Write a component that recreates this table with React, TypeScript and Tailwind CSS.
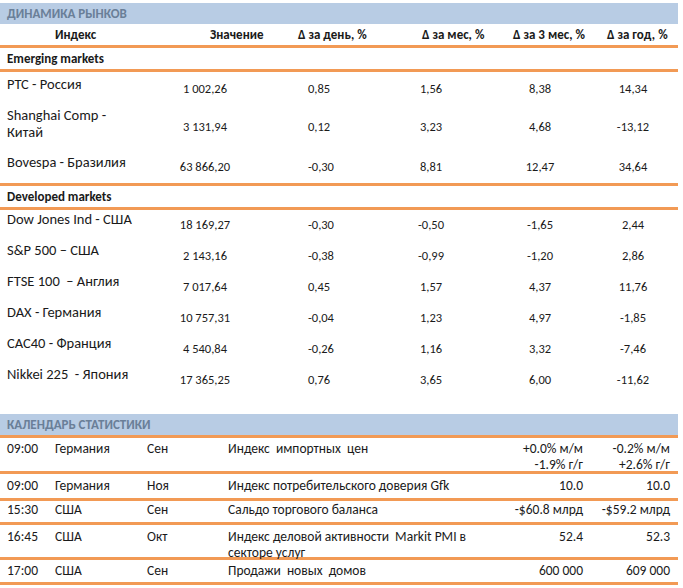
import React from "react"

const font = { fontFamily: "Carlito, Lato, 'Noto Sans', sans-serif" }

type Market = {
  name: string[]
  h: string
  np: string
  vp: string
  values: string[]
}

const emerging: Market[] = [
  { name: ["РТС - Россия"], h: "h-[35px]", np: "pt-[4px]", vp: "pt-[9px]", values: ["1 002,26", "0,85", "1,56", "8,38", "14,34"] },
  { name: ["Shanghai Comp -", "Китай"], h: "h-[47px]", np: "pt-0", vp: "pt-[12px]", values: ["3 131,94", "0,12", "3,23", "4,68", "-13,12"] },
  { name: ["Bovespa - Бразилия"], h: "h-[29px]", np: "pt-0", vp: "pt-[5px]", values: ["63 866,20", "-0,30", "8,81", "12,47", "34,64"] },
]

const developed: Market[] = [
  ["Dow Jones Ind - США", "18 169,27", "-0,30", "-0,50", "-1,65", "2,44"],
  ["S&P 500 – США", "2 143,16", "-0,38", "-0,99", "-1,20", "2,86"],
  ["FTSE 100  – Англия", "7 017,64", "0,45", "1,57", "4,37", "11,76"],
  ["DAX - Германия", "10 757,31", "-0,04", "1,23", "4,97", "-1,85"],
  ["CAC40 - Франция", "4 540,84", "-0,26", "1,16", "3,32", "-7,46"],
  ["Nikkei 225  - Япония", "17 365,25", "0,76", "3,65", "6,00", "-11,62"],
].map(([name, ...values]) => ({
  name: [name],
  h: "h-[31px]",
  np: "pt-[1px]",
  vp: "pt-[7px]",
  values,
}))

const calendar = [
  { time: "09:00", country: "Германия", period: "Сен", event: ["Индекс  импортных  цен"], prev: ["+0.0% м/м", "-1.9% г/г"], fc: ["-0.2% м/м", "+2.6% г/г"], h: "h-[33px]", pt: "pt-[3px]" },
  { time: "09:00", country: "Германия", period: "Ноя", event: ["Индекс потребительского доверия Gfk"], prev: ["10.0"], fc: ["10.0"], h: "h-[24px]", pt: "pt-[4px]" },
  { time: "15:30", country: "США", period: "Сен", event: ["Сальдо торгового баланса"], prev: ["-$60.8 млрд"], fc: ["-$59.2 млрд"], h: "h-[21px]", pt: "pt-[1px]" },
  { time: "16:45", country: "США", period: "Окт", event: ["Индекс деловой активности  Markit PMI в", "секторе услуг"], prev: ["52.4"], fc: ["52.3"], h: "h-[32px]", pt: "pt-[4px]" },
  { time: "17:00", country: "США", period: "Сен", event: ["Продажи  новых  домов"], prev: ["600 000"], fc: ["609 000"], h: "h-[22px]", pt: "pt-[3px]" },
]

function Line() {
  return <div className="h-[3px] w-[678px] bg-[#f29a55]" />
}

function Band({ title }: { title: string }) {
  return (
    <div className="flex h-[21px] w-[678px] items-center bg-[#b8cce4] pl-[7px] text-[13px] font-bold text-[#6a7f98]">
      {title}
    </div>
  )
}

function MarketRow({ m }: { m: Market }) {
  return (
    <div className={`flex w-[678px] text-[12.5px] leading-[16px] text-[#1a1a1a] ${m.h}`}>
      <div className={`w-[175px] pl-[7px] text-[14.5px] leading-[17px] ${m.np}`}>
        {m.name.map((n) => (
          <div key={n} className="whitespace-pre">{n}</div>
        ))}
      </div>
      <div className={`w-[60px] text-center ${m.vp}`}>{m.values[0]}</div>
      <div className={`w-[145px] pl-[73px] ${m.vp}`}>{m.values[1]}</div>
      <div className={`w-[102px] text-center ${m.vp}`}>{m.values[2]}</div>
      <div className={`w-[116px] text-center ${m.vp}`}>{m.values[3]}</div>
      <div className={`w-[70px] text-center ${m.vp}`}>{m.values[4]}</div>
    </div>
  )
}

function GroupRow({ title }: { title: string }) {
  return (
    <div className="flex h-[21px] w-[678px] items-center pl-[7px] text-[13px] font-bold text-[#1a1a1a]">
      {title}
    </div>
  )
}

export default function App() {
  return (
    <div className="min-h-[588px] w-[683px] bg-white pt-[3px]" style={font}>
      {/* динамика рынков */}
      <Band title="ДИНАМИКА РЫНКОВ" />
      <div className="flex h-[21px] w-[678px] items-center text-[13px] font-bold text-[#1a1a1a]">
        <div className="w-[152px] pl-[55px]">Индекс</div>
        <div className="w-[138px] pl-[58px]">Значение</div>
        <div className="w-[100px] pl-[8px]">Δ за день, %</div>
        <div className="w-[110px] pl-[32px]">Δ за мес, %</div>
        <div className="w-[100px] pl-[13px]">Δ за 3 мес, %</div>
        <div className="w-[78px] pl-[7px]">Δ за год, %</div>
      </div>
      <Line />
      <GroupRow title="Emerging markets" />
      <Line />
      {emerging.map((m) => (
        <MarketRow key={m.name[0]} m={m} />
      ))}
      <Line />
      <GroupRow title="Developed markets" />
      <Line />
      {developed.map((m) => (
        <MarketRow key={m.name[0]} m={m} />
      ))}

      {/* календарь статистики */}
      <div className="mt-[18px]">
        <Band title="КАЛЕНДАРЬ СТАТИСТИКИ" />
      </div>
      <Line />
      {calendar.map((c, i) => (
        <div key={i}>
          <div className={`flex w-[678px] text-[13.5px] leading-[16px] text-[#1a1a1a] ${c.h} ${c.pt}`}>
            <div className="w-[55px] pl-[7px]">{c.time}</div>
            <div className="w-[92px]">{c.country}</div>
            <div className="w-[81px]">{c.period}</div>
            <div className="w-[242px]">
              {c.event.map((e) => (
                <div key={e} className="whitespace-pre">{e}</div>
              ))}
            </div>
            <div className="w-[113px] text-right">
              {c.prev.map((p) => (
                <div key={p}>{p}</div>
              ))}
            </div>
            <div className="w-[87px] text-right">
              {c.fc.map((p) => (
                <div key={p}>{p}</div>
              ))}
            </div>
          </div>
          <Line />
        </div>
      ))}
    </div>
  )
}
